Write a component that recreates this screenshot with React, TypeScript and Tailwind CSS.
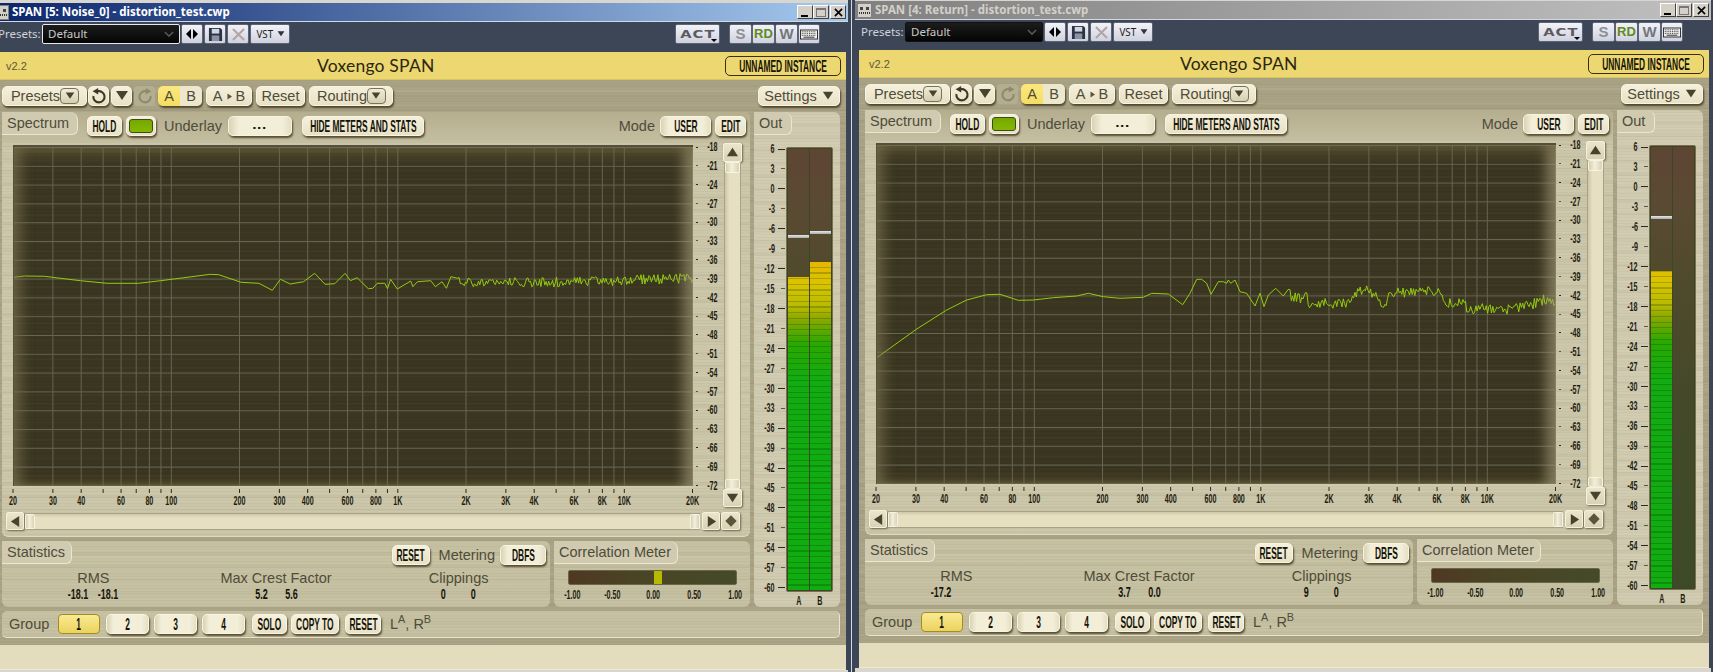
import React from "react";

type N = React.ReactNode;
type Pt = [number, number];

const BRUSH =
  "bg-[repeating-linear-gradient(0deg,rgba(70,60,30,.035)_0_1px,transparent_1px_3px),repeating-linear-gradient(0deg,rgba(255,250,225,.05)_0_2px,transparent_2px_7px),repeating-linear-gradient(0deg,rgba(70,60,30,.04)_0_3px,transparent_3px_13px),repeating-linear-gradient(0deg,rgba(255,250,225,.03)_0_5px,transparent_5px_23px)]";
const BTN =
  "flex items-center justify-center shrink-0 rounded-[5px] border border-[#f8f4e2] bg-[linear-gradient(#f5f0db,#e8e1c6)] shadow-[1px_2px_2px_rgba(50,40,15,.75)]";
const WIDEBTN =
  "flex items-center justify-center shrink-0 rounded-[5px] border border-[#f8f4e2] bg-[linear-gradient(90deg,#d9d3b5,#f3eed8_16%,#f3eed8_85%,#e6dfc4)] shadow-[1px_2px_2px_rgba(50,40,15,.75)]";
const TXT = "text-[14.5px] leading-none text-[#4f4c39] whitespace-nowrap";
const TB =
  "flex items-center justify-center shrink-0 h-[20px] border border-[#5d6473] rounded-[2px] bg-[linear-gradient(#f2f3f8,#cfd1de)]";

const Cond = ({ children }: { children: N }) => (
  <span className="inline-block whitespace-nowrap font-bold text-[16.5px] leading-none text-[#15130a] scale-x-[.51]">{children}</span>
);
const Small = ({ children }: { children: N }) => (
  <span className="inline-block whitespace-nowrap font-bold text-[13.5px] leading-none text-[#1f1d11] scale-x-[.53]">{children}</span>
);
const SmallR = ({ children }: { children: N }) => (
  <span className="inline-block whitespace-nowrap font-bold text-[13.5px] leading-none text-[#1f1d11] scale-x-[.53] origin-right">{children}</span>
);
const Val = ({ children }: { children: N }) => (
  <span className="inline-block whitespace-nowrap font-bold text-[15px] leading-none text-[#15130a] scale-x-[.6]">{children}</span>
);

const Tri = ({ dir, cls }: { dir: "d" | "u" | "l" | "r"; cls: string }) => {
  const p = { d: "1,2 13,2 7,11", u: "1,11 13,11 7,2", l: "11,1 11,13 2,7", r: "3,1 3,13 12,7" }[dir];
  return (
    <svg viewBox="0 0 14 14" className={cls} fill="currentColor">
      <polygon points={p} />
    </svg>
  );
};

const Drop = () => (
  <div className="flex items-center justify-center w-[19px] h-[16px] rounded-[4px] border border-[#77725a] bg-[linear-gradient(#f1ecd6,#d5cfb2)]">
    <Tri dir="d" cls="w-[10px] h-[10px] text-[#47432f]" />
  </div>
);

const Reload = ({ flip, color }: { flip?: boolean; color: string }) => (
  <svg viewBox="0 0 20 20" className={flip ? "w-[16px] h-[16px] -scale-x-100" : "w-[16px] h-[16px]"} fill="none" stroke={color} strokeWidth="2.6">
    <path d="M8 4.2a7 7 0 1 1-5 5.8" />
    <polygon points="2,4 9,0 9,8" fill={color} stroke="none" />
  </svg>
);

const Tab = ({ w, children }: { w: string; children: N }) => (
  <div className={`${w} h-[23px] shrink-0 flex items-center pl-[5px] rounded-tr-[8px] rounded-br-[6px] border-r border-b border-[#ece6cc] bg-[#d0cab0] ${TXT}`}>{children}</div>
);

/* ---------- spectrum data ---------- */
const leftKeys: Pt[] = ([
  [30, 82], [55, 78], [100, 79], [130, 84], [180, 92], [240, 100], [310, 100], [360, 92], [430, 80], [470, 73], [490, 74],
  [540, 97], [580, 100], [610, 121], [628, 88], [650, 102], [680, 95], [705, 70], [728, 103], [750, 101], [773, 70], [785, 92],
  [800, 83], [825, 116], [835, 115], [845, 100], [862, 100], [868, 116], [875, 88], [890, 117], [920, 93], [925, 110], [935, 95], [965, 92],
  [975, 110], [990, 95], [1000, 115], [1010, 80], [1025, 85],
] as Pt[]).map(([x, y]) => [x / 2.24 - 13, 105 + y / 3] as Pt);
const rightKeys: Pt[] = ([
  [52, 382], [170, 297], [260, 240], [320, 210], [380, 194], [420, 193], [475, 211], [520, 210], [580, 203], [650, 198], [685, 190],
  [730, 200], [780, 205], [850, 202], [875, 190], [925, 192], [968, 224], [990, 190], [1010, 148], [1025, 148], [1040, 160], [1053, 193],
  [1075, 155], [1090, 155], [1100, 160], [1105, 150], [1112, 160], [1125, 150], [1140, 185], [1160, 190], [1185, 228], [1200, 190],
  [1212, 230], [1225, 195], [1247, 175], [1270, 198], [1285, 178],
] as Pt[]).map(([x, y]) => [x / 3 - 16, 87 + y / 3] as Pt);
const leftEnv: Pt[] = [[446, 137], [560, 137], [680, 133]];
const rightEnv: Pt[] = ([
  [0, 135], [20, 148], [50, 140], [60, 165], [100, 155], [140, 165], [190, 150], [200, 122], [230, 122], [280, 160], [320, 122], [350, 130],
  [440, 125], [470, 155], [510, 160], [550, 180], [600, 175], [660, 180], [740, 160], [760, 150], [795, 155],
] as Pt[]).map(([x, y]) => [414 + x / 3, 107 + y / 3] as Pt);

function curve(keys: Pt[], env: Pt[], amp: number, seed: number) {
  let s = seed;
  const rnd = () => {
    s = (s * 16807) % 2147483647;
    return (s / 2147483647) * 2 - 1;
  };
  const pts: Pt[] = [...keys];
  let x = env[0][0];
  while (x < 680) {
    let i = 0;
    while (i < env.length - 2 && env[i + 1][0] < x) i++;
    const [x0, y0] = env[i];
    const [x1, y1] = env[i + 1];
    const y = y0 + ((y1 - y0) * (x - x0)) / (x1 - x0);
    pts.push([x, y + rnd() * amp]);
    x += 1.3;
  }
  return pts.map(([a, b]) => `${a.toFixed(1)},${b.toFixed(1)}`).join(" ");
}

const LEFT = curve(leftKeys, leftEnv, 5, 4711);
const RIGHT = curve(rightKeys, rightEnv, 5.5, 1999);

const F = [20, 30, 40, 50, 60, 70, 80, 90, 100, 200, 300, 400, 500, 600, 700, 800, 900, 1000, 2000, 3000, 4000, 5000, 6000, 7000, 8000, 9000, 10000, 20000];
const FL: Record<number, string> = { 20: "20", 30: "30", 40: "40", 60: "60", 80: "80", 100: "100", 200: "200", 300: "300", 400: "400", 600: "600", 800: "800", 1000: "1K", 2000: "2K", 3000: "3K", 4000: "4K", 6000: "6K", 8000: "8K", 10000: "10K", 20000: "20K" };
const fx = (f: number) => 226.5 * Math.log10(f / 20);
const DB = Array.from({ length: 19 }, (_, i) => -18 - i * 3);
const OUT = Array.from({ length: 23 }, (_, i) => 6 - i * 3);

const Graph = ({ pts }: { pts: string }) => (
  <div className="relative w-[680px] h-[341px] mt-[2px] bg-[#3b3621] bg-[repeating-linear-gradient(0deg,rgba(0,0,0,.05)_0_1px,transparent_1px_4px),repeating-linear-gradient(0deg,rgba(120,105,60,.06)_0_2px,transparent_2px_9px)]">
    <svg viewBox="0 0 680 341" className="absolute inset-0 w-[680px] h-[341px]">
      {DB.map((_, i) => (
        <line key={i} x1="0" x2="680" y1={2.5 + i * 18.8} y2={2.5 + i * 18.8} stroke="#666452" strokeWidth="1" />
      ))}
      {F.map((f) => (
        <line key={f} x1={fx(f)} x2={fx(f)} y1="0" y2="341" stroke="#666452" strokeWidth="1" />
      ))}
      <polyline points={pts} fill="none" stroke="#94cb0e" strokeWidth="1" />
    </svg>
    <div className="absolute inset-0 border-t-2 border-l border-[#55503a] shadow-[inset_0_12px_12px_-4px_rgba(120,108,72,.5),inset_14px_0_12px_-6px_rgba(130,120,85,.55),inset_-16px_0_12px_-6px_rgba(170,160,125,.6),inset_0_-8px_8px_-4px_rgba(120,108,72,.45)]" />
  </div>
);

const XAxis = () => (
  <svg viewBox="0 0 680 21" className="w-[680px] h-[21px] overflow-visible">
    {F.map((f) => (
      <line key={f} x1={fx(f)} x2={fx(f)} y1="3" y2="7" stroke="#2c2a1c" strokeWidth="1" />
    ))}
    {F.filter((f) => FL[f]).map((f) => (
      <text key={f} transform={`translate(${fx(f)},18.5) scale(.53,1)`} textAnchor="middle" fontFamily="Liberation Sans" fontWeight="700" fontSize="13.5" fill="#1f1d11">
        {FL[f]}
      </text>
    ))}
  </svg>
);

const SquareBtn = ({ children, cls }: { children: N; cls: string }) => (
  <div className={`${cls} shrink-0 flex items-center justify-center rounded-[2px] border border-[#f6f1dd] bg-[linear-gradient(#ebe5cb,#d9d2b5)] shadow-[1px_1px_2px_rgba(50,40,15,.6)]`}>{children}</div>
);

const Thumb = ({ cls }: { cls: string }) => <div className={`${cls} shrink-0 rounded-[2px] border border-[#f7f3e2] bg-[linear-gradient(90deg,#d5cfb0,#f4efdc_45%,#d8d2b6)]`} />;

const Spectrum = ({ pts }: { pts: string }) => (
  <div className={`${BRUSH} w-[748px] h-[425px] rounded-[6px] bg-[#cbc5a9] shadow-[inset_0_-1px_0_#e0dac0]`}>
    <div className="flex items-start h-[31px] bg-[linear-gradient(#b4ad8e,#c5bfa2)] rounded-t-[6px]">
      <Tab w="w-[76px]">Spectrum</Tab>
      <div className="flex items-center h-[20px] mt-[4px] flex-1 pr-[4px]">
        <div className={`${BTN} w-[35px] h-[20px] ml-[9px]`}><Cond>HOLD</Cond></div>
        <div className={`${BTN} w-[30px] h-[20px] ml-[4px]`}>
          <div className="w-[24px] h-[14px] rounded-[3px] border border-[#3d4a14] bg-[linear-gradient(#74a800,#86b800)]" />
        </div>
        <span className={`${TXT} ml-[8px] w-[59px]`}>Underlay</span>
        <div className={`${WIDEBTN} w-[64px] h-[20px] ml-[5px]`}><Cond><span className="tracking-[4px]">---</span></Cond></div>
        <div className={`${BTN} w-[122px] h-[20px] ml-[10px]`}><Cond>HIDE METERS AND STATS</Cond></div>
        <span className={`${TXT} ml-auto mr-[5px]`}>Mode</span>
        <div className={`${WIDEBTN} w-[51px] h-[20px]`}><Cond>USER</Cond></div>
        <div className={`${BTN} w-[31px] h-[20px] ml-[4px]`}><Cond>EDIT</Cond></div>
      </div>
    </div>
    <div className="flex h-[364px] pl-[11px]">
      <div className="w-[680px] shrink-0">
        <Graph pts={pts} />
        <XAxis />
      </div>
      <div className="w-[30px] shrink-0 pr-[5px] pt-[2px]">
        <div className="-mt-[7.4px] flex flex-col">
          {DB.map((d, i) => (
            <div key={d} className="h-[18.8px] flex items-center justify-between pl-[3px]">
              <div className={i % 2 === 0 ? "w-[7px] h-[1px] bg-[#2c2a1c]" : "w-[4px] h-[1px] bg-[#5b5846]"} />
              <SmallR>{d}</SmallR>
            </div>
          ))}
        </div>
      </div>
      <div className="w-[19px] shrink-0 flex flex-col">
        <SquareBtn cls="w-[19px] h-[19px]"><Tri dir="u" cls="w-[13px] h-[13px] text-[#47432f]" /></SquareBtn>
        <div className="flex-1 mx-[1px] flex flex-col justify-between bg-[linear-gradient(90deg,#cdc7a8,#e6dfc1_30%,#e6dfc1)] border-x border-[#a9a384]">
          <Thumb cls="h-[11px]" />
          <Thumb cls="h-[10px]" />
        </div>
        <SquareBtn cls="w-[19px] h-[18px]"><Tri dir="d" cls="w-[13px] h-[13px] text-[#47432f]" /></SquareBtn>
      </div>
    </div>
    <div className="flex items-center h-[18px] mt-[5px] pl-[4px]">
      <SquareBtn cls="w-[18px] h-[18px]"><Tri dir="l" cls="w-[13px] h-[13px] text-[#47432f]" /></SquareBtn>
      <div className="w-[675px] ml-[1px] h-[17px] flex justify-between bg-[linear-gradient(#cfc9aa,#e6dfc1_25%,#e6dfc1)] border-y border-[#a9a384]">
        <Thumb cls="w-[10px]" />
        <Thumb cls="w-[10px]" />
      </div>
      <SquareBtn cls="w-[18px] h-[18px] ml-[2px]"><Tri dir="r" cls="w-[13px] h-[13px] text-[#47432f]" /></SquareBtn>
      <SquareBtn cls="w-[19px] h-[18px] ml-[1px]">
        <div className="w-[8px] h-[8px] rotate-45 bg-[#5a553b]" />
      </SquareBtn>
    </div>
  </div>
);

const Stat = ({ label, vals }: { label: string; vals: [string, string] }) => (
  <div className="flex flex-col items-center">
    <span className={`${TXT} h-[15px] flex items-center`}>{label}</span>
    <div className="flex justify-center">
      <span className="w-[30px] flex justify-center"><Val>{vals[0]}</Val></span>
      <span className="w-[30px] flex justify-center"><Val>{vals[1]}</Val></span>
    </div>
  </div>
);

const Stats = ({ s }: { s: [string, string][] }) => (
  <div className={`${BRUSH} w-[548px] h-[66px] rounded-[6px] bg-[#c6c0a2]`}>
    <div className="flex items-start h-[30px]">
      <Tab w="w-[70px]">Statistics</Tab>
      <div className="ml-auto mt-[4px] pr-[4px] flex items-center">
        <div className={`${BTN} w-[38px] h-[20px]`}><Cond>RESET</Cond></div>
        <span className={`${TXT} ml-[9px] mr-[5px]`}>Metering</span>
        <div className={`${WIDEBTN} w-[46px] h-[20px]`}><Cond>DBFS</Cond></div>
      </div>
    </div>
    <div className="grid grid-cols-3">
      <Stat label="RMS" vals={s[0]} />
      <Stat label="Max Crest Factor" vals={s[1]} />
      <Stat label="Clippings" vals={s[2]} />
    </div>
  </div>
);

const Correlation = ({ on }: { on: boolean }) => (
  <div className={`${BRUSH} w-[196px] h-[66px] rounded-[6px] bg-[#c6c0a2]`}>
    <div className="h-[29px]"><Tab w="w-[124px]">Correlation Meter</Tab></div>
    <div className="relative ml-[14px] w-[169px] h-[15px] rounded-[2px] border border-[#6c6648] bg-[linear-gradient(90deg,#4f3823,#4a4425_40%,#454a28)]">
      {on && (
        <div className="absolute left-[85px] top-0 bottom-0 w-[8px] bg-[linear-gradient(90deg,#b7b800_0_45%,#5a5a10_45%_55%,#b7b800_55%)]" />
      )}
    </div>
    <div className="flex justify-between pl-[12px] pr-[9px] mt-[3px]">
      {["-1.00", "-0.50", "0.00", "0.50", "1.00"].map((t) => (
        <span key={t} className="w-[12px] flex justify-center"><Small>{t}</Small></span>
      ))}
    </div>
  </div>
);

const Channel = ({ top, peak }: { top?: number; peak?: number }) => (
  <div className="relative w-[22px] h-[441px] flex flex-col justify-end bg-[linear-gradient(#5e4534,#5a4a33_60px,#504a2c_130px,#44492a_250px,#3d4a28)]">
    {top !== undefined && (
      <div
        className="relative w-full bg-[linear-gradient(#e6b800_114px,#d9c400_135px,#b8ba00_158px,#8aa800_170px,#2aa800_195px,#12ac12_232px,#10ac10)] bg-[length:100%_441px] bg-bottom bg-no-repeat"
        style={{ height: 441 - top }}
      >
        <div className="absolute inset-0 bg-[repeating-linear-gradient(0deg,transparent_0_4.4px,rgba(0,40,0,.22)_4.4px_5.67px)]" />
      </div>
    )}
    {peak !== undefined && (
      <div className="absolute left-0 right-0 h-[3px] bg-[linear-gradient(#e8e8e8,#a9abb0)]" style={{ top: peak }} />
    )}
  </div>
);

const Out = ({ a, b, pa, pb }: { a?: number; b?: number; pa?: number; pb?: number }) => (
  <div className={`${BRUSH} w-[86px] h-[495px] rounded-[6px] bg-[#d0cab0]`}>
    <div className="h-[35px]"><Tab w="w-[38px]">Out</Tab></div>
    <div className="flex">
      <div className="w-[32px] shrink-0 pr-[1px]">
        <div className="-mt-[7.98px] flex flex-col">
          {OUT.map((d, i) => (
            <div key={d} className="h-[19.95px] flex items-center justify-end">
              <span className="w-[20px] flex justify-end mr-[3px]"><SmallR>{d}</SmallR></span>
              <div className="w-[7px] flex justify-end">
                <div className={i % 2 === 0 ? "w-[7px] h-[1px] bg-[#2c2a1c]" : "w-[4px] h-[1px] bg-[#5b5846]"} />
              </div>
            </div>
          ))}
        </div>
      </div>
      <div className="w-[47px] shrink-0 flex flex-col">
        <div className="flex gap-[1px] p-[1px] rounded-[2px] border border-[#77714f] bg-[#3c4626]">
          <Channel top={a} peak={pa} />
          <Channel top={b} peak={pb} />
        </div>
        <div className="flex justify-around mt-[2px] px-[2px]">
          <Small>A</Small>
          <Small>B</Small>
        </div>
      </div>
    </div>
  </div>
);

const Group = () => (
  <div className={`${BRUSH} w-[838px] h-[27px] mt-[4px] flex items-center pl-[7px] rounded-[5px] border-b border-r border-[#ebe5cb] bg-[#c6c0a2]`}>
    <span className={`${TXT} w-[49px]`}>Group</span>
    <div className="flex items-center justify-center shrink-0 w-[42px] h-[20px] rounded-[4px] border border-[#a48c20] bg-[linear-gradient(#f9ea92,#ecd35f)]"><Cond>1</Cond></div>
    <div className={`${WIDEBTN} w-[43px] h-[20px] ml-[6px]`}><Cond>2</Cond></div>
    <div className={`${WIDEBTN} w-[43px] h-[20px] ml-[5px]`}><Cond>3</Cond></div>
    <div className={`${WIDEBTN} w-[43px] h-[20px] ml-[5px]`}><Cond>4</Cond></div>
    <div className={`${BTN} w-[35px] h-[20px] ml-[7px]`}><Cond>SOLO</Cond></div>
    <div className={`${BTN} w-[48px] h-[20px] ml-[4px]`}><Cond>COPY TO</Cond></div>
    <div className={`${BTN} w-[36px] h-[20px] ml-[6px]`}><Cond>RESET</Cond></div>
    <span className={`${TXT} ml-[9px]`}>L<sup>A</sup>, R<sup>B</sup></span>
  </div>
);

const Plugin = ({ pts, stats, corr, meter }: { pts: string; stats: [string, string][]; corr: boolean; meter: { a?: number; b?: number; pa?: number; pb?: number } }) => (
  <div className="w-[850px] h-[618px] flex flex-col">
    <div className="h-[28px] shrink-0 flex items-center pl-[10px] pr-[5px] bg-[#ecd770] shadow-[inset_0_-1px_0_#d8c566]">
      <span className="w-[311px] text-[11px] text-[#5e5838]">v2.2</span>
      <span className="font-['Lato',sans-serif] text-[17.5px] tracking-[.2px] text-[#2c2712]">Voxengo SPAN</span>
      <div className="ml-auto flex items-center justify-center w-[116px] h-[20px] rounded-[5px] border border-[#3c2f08] bg-[#ecd770]"><Cond>UNNAMED INSTANCE</Cond></div>
    </div>
    <div className={`${BRUSH} h-[565px] shrink-0 px-[6px] pt-[6px] bg-[#a9a285]`}>
      <div className="flex items-center h-[20px]">
        <div className={`${BTN} w-[85px] h-[20px] pl-[4px] pr-[3px] justify-between`}><span className={TXT}>Presets</span><Drop /></div>
        <div className={`${BTN} w-[21px] h-[20px] ml-[1px]`}><Reload color="#3c3826" /></div>
        <div className={`${BTN} w-[21px] h-[20px] ml-[2px]`}><Tri dir="d" cls="w-[14px] h-[14px] text-[#47432f]" /></div>
        <div className="flex items-center justify-center shrink-0 w-[21px] h-[20px] ml-[2px] rounded-[4px] bg-[#b4ae91]"><Reload flip color="#8f8a6e" /></div>
        <div className="flex shrink-0 h-[20px] w-[44px] ml-[3px] rounded-[5px] overflow-hidden shadow-[1px_2px_2px_rgba(50,40,15,.75)]">
          <div className={`${TXT} w-[22px] flex items-center justify-center bg-[linear-gradient(#fbe77f,#f6de62)] text-[#3c3820]`}>A</div>
          <div className={`${TXT} w-[22px] flex items-center justify-center bg-[#ede7ce]`}>B</div>
        </div>
        <div className={`${BTN} w-[46px] h-[20px] ml-[4px] gap-[3px] ${TXT}`}>A<Tri dir="r" cls="w-[7px] h-[7px] text-[#57543f]" />B</div>
        <div className={`${BTN} w-[49px] h-[20px] ml-[4px] ${TXT}`}>Reset</div>
        <div className={`${BTN} w-[84px] h-[20px] ml-[4px] pl-[4px] pr-[3px] justify-between`}><span className={TXT}>Routing</span><Drop /></div>
        <div className={`${BTN} w-[82px] h-[20px] ml-auto gap-[5px] ${TXT}`}>Settings<Tri dir="d" cls="w-[12px] h-[12px] text-[#47432f]" /></div>
      </div>
      <div className="flex gap-[4px] mt-[6px]">
        <div className="flex flex-col gap-[4px]">
          <Spectrum pts={pts} />
          <div className="flex gap-[4px]">
            <Stats s={stats} />
            <Correlation on={corr} />
          </div>
        </div>
        <Out {...meter} />
      </div>
      <Group />
    </div>
    <div className="flex-1 bg-[#e3dcbd] border-b border-[#efe9ce]" />
  </div>
);

const WinBtn = ({ children, cls }: { children: N; cls?: string }) => (
  <div className={`w-[16px] h-[14px] flex items-center justify-center bg-[#d4d0c8] border-t border-l border-[#fff] border-r border-b border-r-[#404040] border-b-[#404040] ${cls ?? ""}`}>{children}</div>
);

const Win = ({ active, title, top, children, comboBorder }: { active: boolean; title: string; top: string; children: N; comboBorder: string }) => (
  <div className={`w-[856px] shrink-0 h-[672px] ${top}`}>
    <div className={`h-[18px] flex items-center pr-[2px] ${active ? "bg-[linear-gradient(90deg,#0a246a,#a6caf0)] text-white" : "bg-[linear-gradient(90deg,#808080,#c0c0c0)] text-[#d4d0c8]"}`}>
      <div className="w-[15px] h-[15px] ml-[2px] mr-[3px] flex flex-col items-center justify-center bg-[#d4d0c8] border border-[#808080]">
        <span className="block w-[9px] h-[3px] border-x-[3px] border-[#444]" />
        <span className="block w-[11px] h-[2px] mt-[2px] bg-[repeating-linear-gradient(90deg,#333_0_1px,transparent_1px_2px)]" />
      </div>
      <span className="font-['Noto_Sans',sans-serif] font-bold text-[11.5px] leading-none">{title}</span>
      <div className="ml-auto flex">
        <WinBtn><div className="w-[7px] h-[2px] mt-[7px] -ml-[2px] bg-black" /></WinBtn>
        <WinBtn><div className="w-[10px] h-[9px] border border-[#777] border-t-2" /></WinBtn>
        <WinBtn cls="ml-[1px]">
          <svg viewBox="0 0 10 10" className="w-[9px] h-[9px]" stroke="#000" strokeWidth="1.8"><path d="M1 1l8 8M9 1l-8 8" /></svg>
        </WinBtn>
      </div>
    </div>
    <div className="h-[1px] bg-[#d4d8e0]" />
    <div className="h-[30px] flex items-start pt-[2px] pl-[6px] bg-[#3d4656] font-['Noto_Sans',sans-serif]">
      <span className="w-[44px] text-[11.5px] leading-[20px] text-[#cfd3da] whitespace-nowrap">Presets:</span>
      <div className={`w-[138px] h-[20px] flex items-center justify-between px-[5px] bg-[linear-gradient(#1c1c1c,#050505)] rounded-[2px] border ${comboBorder}`}>
        <span className="text-[11.5px] text-[#c9c9c9]">Default</span>
        <svg viewBox="0 0 12 8" className="w-[10px] h-[7px]" fill="none" stroke="#555" strokeWidth="2"><path d="M1 1l5 5 5-5" /></svg>
      </div>
      <div className={`${TB} w-[22px] ml-[1px] gap-[2px]`}>
        <div className="w-0 h-0 border-y-[5px] border-y-transparent border-r-[5px] border-r-black" />
        <div className="w-0 h-0 border-y-[5px] border-y-transparent border-l-[5px] border-l-black" />
      </div>
      <div className={`${TB} w-[22px] ml-[1px]`}>
        <svg viewBox="0 0 16 16" className="w-[15px] h-[15px]" fill="#2c3444">
          <path d="M1 1h12l2 2v12H1z" />
          <rect x="4" y="2" width="8" height="5" fill="#cfd6e4" />
          <rect x="4" y="9" width="8" height="6" fill="#8a93a6" />
        </svg>
      </div>
      <div className={`${TB} w-[22px] ml-[1px]`}>
        <svg viewBox="0 0 14 14" className="w-[13px] h-[13px]" stroke="#b5a4a4" strokeWidth="2.2"><path d="M1 1l12 12M13 1L1 13" /></svg>
      </div>
      <div className={`${TB} w-[40px] ml-[1px] gap-[3px]`}>
        <span className="text-[11.5px] text-[#222] scale-x-[.85]">VST</span>
        <Tri dir="d" cls="w-[8px] h-[8px] text-[#333]" />
      </div>
      <div className={`${TB} w-[45px] ml-[385px] relative`}>
        <span className="font-['DejaVu_Sans',sans-serif] font-bold text-[14px] tracking-[1px] text-[#5a5a60] scale-x-[1.05] scale-y-[.8]">ACT</span>
        <div className="absolute right-[2px] bottom-[1px] w-0 h-0 border-x-[3px] border-x-transparent border-t-[3px] border-t-black" />
      </div>
      <div className={`${TB} w-[23px] ml-[9px] font-['Liberation_Sans',sans-serif] font-bold text-[15px] text-[#8d8f96]`}>S</div>
      <div className={`${TB} w-[23px] font-['Liberation_Sans',sans-serif] font-bold text-[13px] text-[#5f8a1c] bg-[linear-gradient(#c7ea55,#aedb3b)]`}>RD</div>
      <div className={`${TB} w-[23px] font-['Liberation_Sans',sans-serif] font-bold text-[15px] text-[#74767d]`}>W</div>
      <div className={`${TB} w-[22px]`}>
        <svg viewBox="0 0 20 12" className="w-[18px] h-[11px]">
          <rect x="0.5" y="1" width="19" height="10" fill="#eee" stroke="#222" />
          <path d="M2 3h16M2 5h16M2 7h16" stroke="#222" strokeDasharray="1 1" />
          <path d="M4 9h12" stroke="#222" />
        </svg>
      </div>
    </div>
    <div className="pl-[4px] bg-[#3d4656]">{children}</div>
  </div>
);

export default function App() {
  return (
    <div className="flex w-[1713px] h-[672px] overflow-hidden bg-[#3d4656] font-['Liberation_Sans',sans-serif]">
      <div className="-ml-[8px] shrink-0 bg-[#d8d6cf]">
        <Win active title="SPAN [5: Noise_0] - distortion_test.cwp" top="pt-[3px]" comboBorder="border-[#e8e8e8]">
          <Plugin
            pts={LEFT}
            stats={[["-18.1", "-18.1"], ["5.2", "5.6"], ["0", "0"]]}
            corr
            meter={{ a: 128, b: 113, pa: 86, pb: 82 }}
          />
        </Win>
      </div>
      <div className="w-[7px] shrink-0 bg-[linear-gradient(90deg,#3b4558_0_3px,#d6d8de_3px_4px,#3b4558_4px)]" />
      <div className="shrink-0 bg-[#d8d6cf]">
        <Win active={false} title="SPAN [4: Return] - distortion_test.cwp" top="pt-[1px]" comboBorder="border-[#111]">
          <Plugin
            pts={RIGHT}
            stats={[["-17.2", ""], ["3.7", "0.0"], ["9", "0"]]}
            corr={false}
            meter={{ a: 124, pa: 69 }}
          />
        </Win>
      </div>
    </div>
  );
}
